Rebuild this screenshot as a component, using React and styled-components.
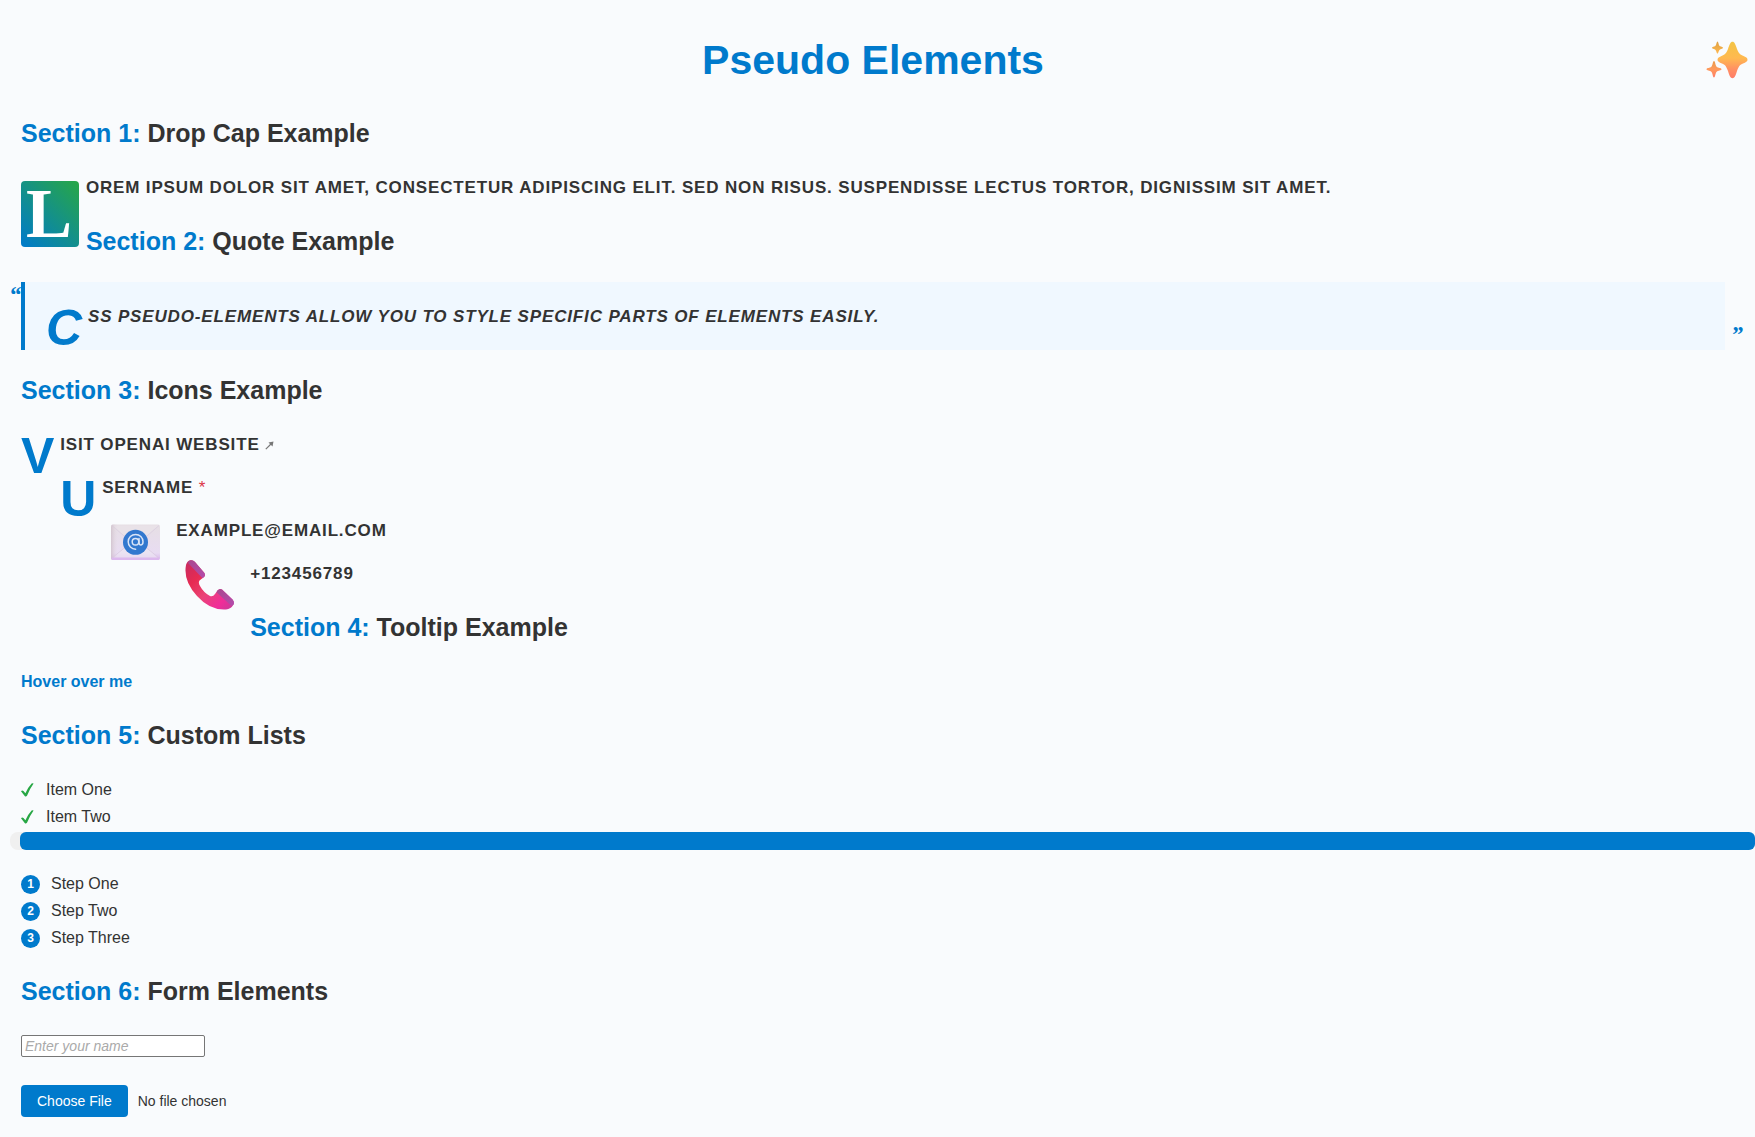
import React from "react";
import styled, { createGlobalStyle, css } from "styled-components";

const BLUE = "#007acc";
const GREEN = "#28a745";

const GlobalStyle = createGlobalStyle`
  body {
    margin: 0;
    background: #f9fbfd;
    color: #333;
    font-family: "Liberation Sans", Arial, sans-serif;
    font-size: 16px;
    line-height: 27px;
    overflow-x: hidden;
  }
`;

const Page = styled.main`
  padding: 27px 30px 20px 21px;
`;

const Title = styled.h1`
  position: relative;
  margin: 0;
  color: ${BLUE};
  font-size: 41px;
  line-height: 66px;
  text-align: center;
`;

const Sparkles = styled.svg`
  position: absolute;
  top: 14px;
  right: -23px;
  width: 42px;
  height: 38px;
`;

const Heading = styled.h2`
  margin: 20px 0 21px;
  font-size: 25px;
  line-height: 40px;
`;

const Prefix = styled.span`
  color: ${BLUE};
`;

const dropLetter = css`
  &::first-letter {
    float: left;
    margin-right: 5px;
    color: ${BLUE};
    font-size: 50px;
    line-height: 50px;
  }
`;

const Text = styled.p`
  margin: 0 0 16px;
  font-size: 17px;
  font-weight: bold;
  letter-spacing: 0.05em;
  text-transform: uppercase;
  ${(p) => p.$drop && dropLetter}
`;

const Intro = styled(Text)`
  &::first-letter {
    float: left;
    margin: 7px 7px 0 0;
    padding: 6px 6px 6px 5px;
    border-radius: 4px;
    background: linear-gradient(45deg, ${BLUE}, ${GREEN});
    color: #fff;
    font-family: "Liberation Serif", Georgia, serif;
    font-size: 69px;
    line-height: 54px;
  }
`;

const Quote = styled.blockquote`
  position: relative;
  margin: 0;
  padding: 21px 21px 20px;
  border-left: 4px solid ${BLUE};
  background: #f0f8ff;
  font-style: italic;

  ${Text} {
    margin: 0;
  }

  &::before,
  &::after {
    position: absolute;
    color: ${BLUE};
    font-family: "Liberation Serif", Georgia, serif;
    font-size: 24px;
    font-weight: bold;
    line-height: 40px;
  }

  &::before {
    content: "“";
    top: -8px;
    left: -16px;
  }

  &::after {
    content: "”";
    right: -18px;
    bottom: -4px;
  }
`;

const Arrow = styled.svg`
  width: 9px;
  height: 9px;
  margin-left: 5px;
`;

const Required = styled.span`
  color: #dc3545;
  font-weight: normal;
`;

const IconFloat = styled.span`
  float: left;
  display: flex;
  align-items: center;
  height: 50px;
  padding: 0 16px 0 9px;

  svg {
    width: 49px;
    height: 50px;
  }
`;

const Tooltip = styled.span`
  color: ${BLUE};
  font-weight: bold;
  cursor: pointer;
`;

const List = styled.ul`
  margin: 0;
  padding: 0;
  list-style: none;
`;

const Item = styled.li`
  display: flex;
  align-items: center;
  gap: ${(p) => p.$gap}px;
`;

const Check = styled.svg`
  width: 13px;
  height: 14px;
`;

const Step = styled.span`
  width: 19px;
  height: 19px;
  margin-top: 2px;
  border-radius: 50%;
  background: ${BLUE};
  color: #fff;
  font-size: 12px;
  font-weight: bold;
  line-height: 19px;
  text-align: center;
`;

const Track = styled.div`
  margin: 2px -30px 20px -11px;
  padding-left: 10px;
  border-radius: 8px;
  background: #f0f0f0;
`;

const Bar = styled.div`
  height: 18px;
  border-radius: 6px;
  background: ${BLUE};
`;

const Form = styled.form`
  display: flex;
  flex-direction: column;
  align-items: flex-start;
  gap: 28px;
  padding-top: 3px;
`;

const NameInput = styled.input`
  box-sizing: border-box;
  width: 184px;
  height: 22px;
  padding: 1px 3px;
  border: 1px solid #767676;
  border-radius: 2px;
  background: #fff;
  font: 14px "Liberation Sans", Arial, sans-serif;

  &::placeholder {
    color: #aaa;
    font-style: italic;
    opacity: 1;
  }
`;

const FileInput = styled.input`
  color: #333;
  font: 14px "Liberation Sans", Arial, sans-serif;

  &::file-selector-button {
    height: 32px;
    margin: 0 10px 0 0;
    padding: 0 16px;
    border: 0;
    border-radius: 4px;
    background: ${BLUE};
    color: #fff;
    font: inherit;
  }
`;

function SectionHeading({ number, children }) {
  return (
    <Heading>
      <Prefix>Section {number}: </Prefix>
      {children}
    </Heading>
  );
}

function SparklesIcon() {
  return (
    <Sparkles viewBox="0 0 42 38" aria-hidden="true">
      <defs>
        <linearGradient id="spark" x1="0" y1="0" x2="0" y2="1">
          <stop offset="0" stopColor="#f3c445" />
          <stop offset=".45" stopColor="#ffb950" />
          <stop offset=".75" stopColor="#ff9063" />
          <stop offset="1" stopColor="#ff7c68" />
        </linearGradient>
        <linearGradient id="sparkTop" x1="0" y1="0" x2="0" y2="1">
          <stop offset="0" stopColor="#dda044" />
          <stop offset="1" stopColor="#ffb84f" />
        </linearGradient>
        <linearGradient id="sparkLow" x1="0" y1="0" x2="0" y2="1">
          <stop offset="0" stopColor="#e89a4c" />
          <stop offset=".5" stopColor="#ff9a5c" />
          <stop offset="1" stopColor="#ff7c68" />
        </linearGradient>
      </defs>
      <path fill="url(#spark)" d="M26.500 .8C28.500 .8 29.500 3.500 31 8C32.800 12.500 34 13.500 37 14.800C40 16 41.500 17.200 41.500 18.800C41.500 20.500 39.800 21.500 37 22.500C34 23.800 32.800 25 31 30C29.500 35 28.500 37.200 26.500 37.200C24.500 37.200 23.500 35 22 30C20.200 25 19 23.800 16 22.500C13.200 21.500 11.500 20.500 11.500 18.800C11.500 17.200 13 16 16 14.800C19 13.500 20.200 12.500 22 8C23.500 3.500 24.500 .8 26.500 .8Z" />
      <path fill="url(#sparkTop)" d="M11.500 .5C12.500 .5 12.500 4.500 14 5.200C15.500 5.800 17 5.800 17 6.800C17 7.800 15.500 7.800 14 8.400C12.500 9.200 12.500 12.500 11.500 12.500C10.500 12.500 10.500 9.200 9 8.400C7.500 7.800 6 7.800 6 6.800C6 5.800 7.500 5.800 9 5.200C10.500 4.500 10.500 .5 11.500 .5Z" />
      <path fill="url(#sparkLow)" d="M8 20C9.300 20 9.300 24.500 10.700 25.800C12 27 15.500 26.800 15.500 28.300C15.500 29.800 12 29.500 10.700 30.800C9.300 32 9.300 36.500 8 36.500C6.700 36.500 6.700 32 5.300 30.800C4 29.500 .5 29.800 .5 28.300C.5 26.800 4 27 5.300 25.800C6.700 24.500 6.700 20 8 20Z" />
    </Sparkles>
  );
}

function MailIcon() {
  return (
    <svg viewBox="0 0 49 50" aria-hidden="true">
      <defs>
        <linearGradient id="mail" x1="0" y1="0" x2="0" y2="1">
          <stop offset="0" stopColor="#e6dfe4" />
          <stop offset=".8" stopColor="#e8dcf2" />
          <stop offset="1" stopColor="#d9b5ec" />
        </linearGradient>
        <linearGradient id="mailEdge" x1="0" y1="0" x2="1" y2="0">
          <stop offset="0" stopColor="#cfc0ca" stopOpacity=".8" />
          <stop offset=".15" stopColor="#e8dfe8" stopOpacity="0" />
        </linearGradient>
      </defs>
      <rect y="7.500" width="49" height="35.500" rx="2" fill="url(#mail)" />
      <path fill="#ede5f2" d="M1 42L20 25H29L48 42Z" opacity=".7" />
      <path fill="#e9e2e8" d="M1 8.500L20 25Q24.500 29 29 25L48 8.500Z" />
      <path fill="none" stroke="#d9cde0" strokeWidth=".8" d="M1 8.500L20 25M48 8.500L29 25M1 41L17 28M48 41L32 28" />
      <rect y="7.500" width="49" height="35.500" rx="2" fill="url(#mailEdge)" />
      <path fill="#dcb9ee" d="M.5 40.500H48.500Q48.500 43 47 43H2Q.5 43 .5 40.500Z" />
      <circle cx="24.500" cy="25.300" r="12.500" fill="#3278cf" />
      <circle cx="24.500" cy="24.800" r="3.300" fill="none" stroke="#d9e4f7" strokeWidth="1.500" />
      <path fill="none" stroke="#d9e4f7" strokeWidth="1.500" strokeLinecap="round" d="M28 21.500V25.800Q28.200 28 30 28Q32 27.800 32 24.800A7.400 7.400 0 1 0 24.600 32.200" />
    </svg>
  );
}

function PhoneIcon() {
  return (
    <svg viewBox="0 0 49 50" aria-hidden="true">
      <defs>
        <linearGradient id="phone" x1="0" y1="0" x2="1" y2="1">
          <stop offset="0" stopColor="#c52b62" />
          <stop offset=".3" stopColor="#e72b52" />
          <stop offset=".55" stopColor="#ea4477" />
          <stop offset=".8" stopColor="#f02d99" />
          <stop offset="1" stopColor="#c43c98" />
        </linearGradient>
        <linearGradient id="phoneCap" x1="0" y1="0" x2="1" y2="1">
          <stop offset="0" stopColor="#a9488e" />
          <stop offset="1" stopColor="#b34dac" />
        </linearGradient>
      </defs>
      <path fill="url(#phone)" d="M1 5Q2 1 5.500 .3Q8 0 10 2L19 12.500Q21 15 19 17L14.500 20.500Q13 22.500 15 26Q18.500 32.500 25 36Q28 37 30 34L32.500 30.500Q34.500 28 37 29.500L47.500 39.500Q49.500 42 48.500 44.500Q46 49 41 49.500Q25 50.500 12 36Q-2 21 1 5Z" />
      <path fill="url(#phoneCap)" d="M4 .8Q7 -.8 9.500 1.500L19 12.500Q21 15 19 17L17.500 18.200L3.500 3.500Q2.800 2 4 .8Z" />
      <path fill="url(#phoneCap)" d="M32.500 30.500Q34.500 28 37 29.500L47.500 39.500Q49.800 42 48.500 44.500L46.500 46L31.500 32.300Z" />
    </svg>
  );
}

function CheckIcon() {
  return (
    <Check viewBox="0 0 13 14" aria-hidden="true">
      <path fill={GREEN} d="M0 8.200Q1.200 6.800 2.500 8L4.400 10.200Q7 4.200 10.600 .4Q11.800 0 12.600 .6Q8.700 6 6 12.800Q4.800 14.200 3.700 13Z" />
    </Check>
  );
}

export default function App() {
  return (
    <>
      <GlobalStyle />
      <Page>
        <Title>
          Pseudo Elements
          <SparklesIcon />
        </Title>

        <SectionHeading number={1}>Drop Cap Example</SectionHeading>
        <Intro>
          Lorem ipsum dolor sit amet, consectetur adipiscing elit. Sed non
          risus. Suspendisse lectus tortor, dignissim sit amet.
        </Intro>

        <SectionHeading number={2}>Quote Example</SectionHeading>
        <Quote>
          <Text $drop>
            CSS pseudo-elements allow you to style specific parts of elements
            easily.
          </Text>
        </Quote>

        <SectionHeading number={3}>Icons Example</SectionHeading>
        <Text $drop>
          Visit OpenAI Website
          <Arrow viewBox="0 0 9 9" aria-hidden="true">
            <path fill="none" stroke="#777" strokeWidth="1.200" d="M.8 8.200L6.500 2.500" />
            <path fill="#777" d="M3.500 1.500L8.500 .5L7.500 5.500Z" />
          </Arrow>
        </Text>
        <Text $drop>
          Username <Required>*</Required>
        </Text>
        <Text>
          <IconFloat>
            <MailIcon />
          </IconFloat>
          example@email.com
        </Text>
        <Text>
          <IconFloat>
            <PhoneIcon />
          </IconFloat>
          +123456789
        </Text>

        <SectionHeading number={4}>Tooltip Example</SectionHeading>
        <Tooltip>Hover over me</Tooltip>

        <SectionHeading number={5}>Custom Lists</SectionHeading>
        <List>
          {["Item One", "Item Two"].map((label) => (
            <Item key={label} $gap={12}>
              <CheckIcon />
              {label}
            </Item>
          ))}
        </List>
        <Track>
          <Bar />
        </Track>
        <List as="ol">
          {["Step One", "Step Two", "Step Three"].map((label, i) => (
            <Item key={label} $gap={11}>
              <Step>{i + 1}</Step>
              {label}
            </Item>
          ))}
        </List>

        <SectionHeading number={6}>Form Elements</SectionHeading>
        <Form>
          <NameInput type="text" aria-label="Name" placeholder="Enter your name" />
          <FileInput type="file" aria-label="File" />
        </Form>
      </Page>
    </>
  );
}
